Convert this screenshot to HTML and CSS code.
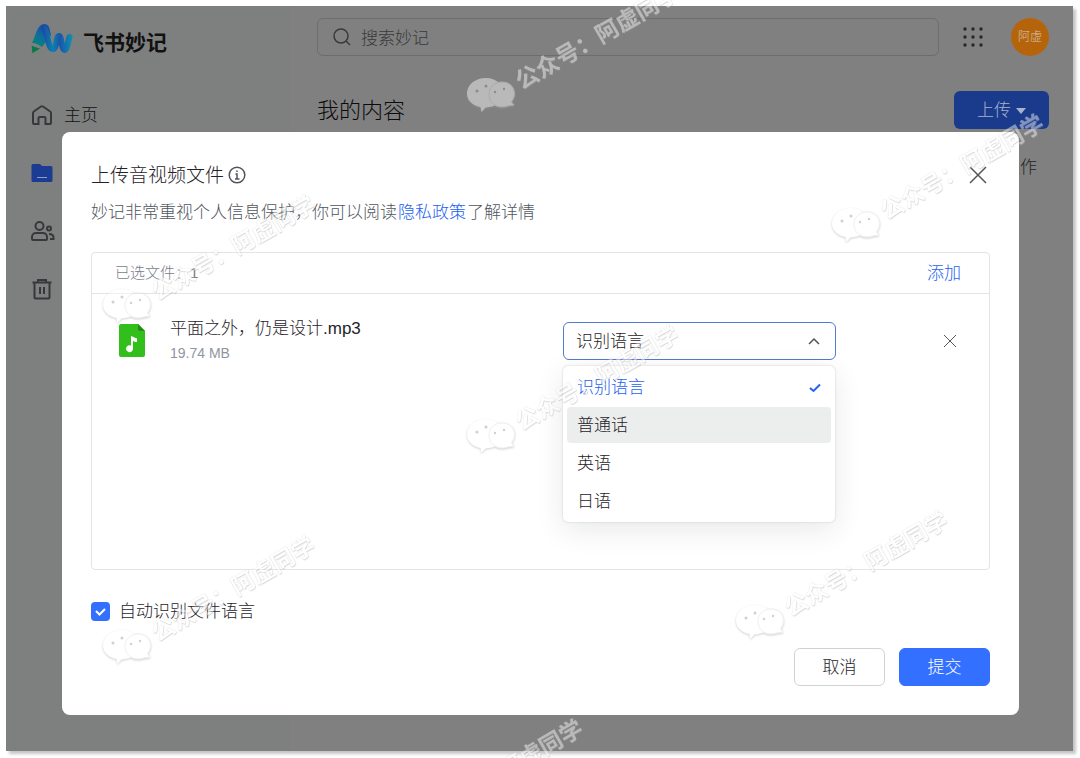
FILE: index.html
```html
<!DOCTYPE html>
<html lang="zh-CN">
<head>
<meta charset="utf-8">
<title>飞书妙记</title>
<meta name="viewport" content="width=device-width, initial-scale=1">
<link rel="stylesheet" href="styles.css">
</head>
<body>
<svg class="defs" width="0" height="0" aria-hidden="true">
  <symbol id="chat" viewBox="0 0 50 36">
    <path d="M20 1C9 1 1 8 1 16.500c0 5 3 9 7.500 11.500 2 1 5 2 6 2l1 5 4-4.500C30 30 38 24 38 16S30 1 20 1z"/>
    <path class="front" d="M36 5c-8 0-13 5.500-13 12.500S28.500 30 36 30c2 0 4-.4 5.600-1l6.400-1-2.500-3C47 22.500 48.500 20 48.500 17 48.500 10 43.500 5 36 5z"/>
    <circle class="eye" cx="11" cy="14" r="1.500"/><circle class="eye" cx="20" cy="9" r="1.500"/>
    <circle class="eye" cx="29" cy="15" r="1.200"/><circle class="eye" cx="38" cy="12" r="1.200"/>
  </symbol>
</svg>
<div class="app">
  <aside class="sidebar">
    <div class="brand">
      <svg width="42" height="32" viewBox="0 0 42 32" aria-hidden="true">
        <defs>
          <linearGradient id="g1" gradientUnits="userSpaceOnUse" x1="4" y1="24" x2="14" y2="2"><stop offset="0" stop-color="#06866e"/><stop offset=".5" stop-color="#0c6f9c"/><stop offset="1" stop-color="#1c4aa6"/></linearGradient>
          <linearGradient id="g2" gradientUnits="userSpaceOnUse" x1="12" y1="0" x2="40" y2="0"><stop offset="0" stop-color="#1c4aa6"/><stop offset=".35" stop-color="#0b82ae"/><stop offset=".6" stop-color="#1a55aa"/><stop offset="1" stop-color="#0d8cae"/></linearGradient>
        </defs>
        <path d="M1 20C4 14 5 8 8 4c3-4 8-4 10 0l2 8-6 8-3 4c-3-2-6-4-10-4z" fill="url(#g1)"/>
        <path d="M13 5C17 11 17 26 22 26C26 26 25 13 28 13C31 13 30 27 34 27C37 26 37 17 38.500 14" fill="none" stroke="url(#g2)" stroke-width="6" stroke-linecap="round" stroke-linejoin="round"/>
        <path d="M0 22l10 3.500L1 31z" fill="#087a4a" stroke="#808080"/>
      </svg>
      <span>飞书妙记</span>
    </div>
    <nav class="nav" aria-label="导航">
      <a href="#home"><svg width="22" height="22" viewBox="0 0 22 22"><path d="M2 9q0-1 .8-1.500L10 2.500q1-.7 2 0l7.200 5Q20 8 20 9v10a1 1 0 0 1-1 1h-4.500v-6a1 1 0 0 0-1-1h-5a1 1 0 0 0-1 1v6H3a1 1 0 0 1-1-1z"/></svg><span>主页</span></a>
      <a href="#mine" aria-label="我的内容"><svg class="solid" width="22" height="22" viewBox="0 0 22 22"><path d="M2 2h7l2 2h9a1.500 1.500 0 0 1 1.500 1.500v13A1.500 1.500 0 0 1 20 20H2a1.500 1.500 0 0 1-1.500-1.500v-15A1.500 1.500 0 0 1 2 2z"/><path class="line" d="M6 15.500h10"/></svg></a>
      <a href="#shared" aria-label="共享内容"><svg width="24" height="22" viewBox="0 0 24 22"><circle cx="8.500" cy="6" r="4"/><path d="M1 19v-2c0-2.500 2-4 4-4h7c2 0 4 1.500 4 4v2c0 .6-.4 1-1 1H2c-.6 0-1-.4-1-1z"/><circle cx="18" cy="8.500" r="2"/><path d="M18 14c3 0 4.500 1.500 4.500 3.500V19H19"/></svg></a>
      <a href="#trash" aria-label="回收站"><svg width="22" height="22" viewBox="0 0 22 22"><path d="M1.500 4.500h19M7 4V2h8v2M3.500 4.500v15c0 .6.400 1 1 1h13c.6 0 1-.4 1-1v-15M9 9v7M13 9v7"/></svg></a>
    </nav>
  </aside>
  <main class="main">
    <header class="topbar">
      <label class="search">
        <svg width="20" height="20" viewBox="0 0 20 20" aria-hidden="true"><circle cx="9" cy="9" r="7"/><path d="M14 14l4 4"/></svg>
        <input type="search" placeholder="搜索妙记" aria-label="搜索妙记">
      </label>
      <button class="apps" type="button" aria-label="应用">
        <svg width="22" height="22" viewBox="0 0 22 22"><circle cx="3" cy="3" r="1.700"/><circle cx="11" cy="3" r="1.700"/><circle cx="19" cy="3" r="1.700"/><circle cx="3" cy="11" r="1.700"/><circle cx="11" cy="11" r="1.700"/><circle cx="19" cy="11" r="1.700"/><circle cx="3" cy="19" r="1.700"/><circle cx="11" cy="19" r="1.700"/><circle cx="19" cy="19" r="1.700"/></svg>
      </button>
      <button class="avatar" type="button">阿虚</button>
    </header>
    <div class="heading">
      <h1>我的内容</h1>
      <button class="upload" type="button">上传<svg width="10" height="6" viewBox="0 0 10 6" aria-hidden="true"><path d="M0 0h10L5 6z"/></svg></button>
    </div>
    <div class="columns">操作</div>
  </main>

  <div class="overlay">
    <section class="modal" role="dialog" aria-labelledby="dialog-title">
      <header class="modal-head">
        <h2 id="dialog-title">上传音视频文件</h2>
        <svg width="18" height="18" viewBox="0 0 18 18" aria-hidden="true"><circle cx="9" cy="9" r="7.800"/><path d="M7.500 8H9v5M7 13h4.500M9 4.500v1.500"/></svg>
        <button class="close" type="button" aria-label="关闭"><svg width="18" height="18" viewBox="0 0 18 18"><path d="M1 1l16 16M17 1L1 17"/></svg></button>
      </header>
      <p class="notice">妙记非常重视个人信息保护，你可以阅读<a href="#privacy">隐私政策</a>了解详情</p>
      <div class="panel">
        <div class="panel-head"><span>已选文件：1</span><button type="button">添加</button></div>
        <div class="file">
          <svg class="file-icon" width="26" height="33" viewBox="0 0 26 33" aria-hidden="true"><path fill="#32bf1c" d="M2 0h17l7 7v24a2 2 0 0 1-2 2H2a2 2 0 0 1-2-2V2a2 2 0 0 1 2-2z"/><path fill="#228c14" d="M19 0l7 7h-5a2 2 0 0 1-2-2z"/><path fill="#fff" d="M12 12c3 1 4 2 6 2.500v3.500c-2 0-3-.5-4-1v7.500a3.500 3.500 0 1 1-2-3z"/></svg>
          <div class="file-info">
            <div class="file-name">平面之外，仍是设计.mp3</div>
            <div class="file-size">19.74 MB</div>
          </div>
          <div class="picker">
            <select aria-label="识别语言"><option>识别语言</option><option>普通话</option><option>英语</option><option>日语</option></select>
            <svg class="caret" width="12" height="8" viewBox="0 0 12 8" aria-hidden="true"><path d="M1 7l5-5 5 5"/></svg>
            <ul class="menu" role="listbox" aria-label="识别语言">
              <li class="chosen" role="option" aria-selected="true">识别语言<svg width="12" height="10" viewBox="0 0 12 10" aria-hidden="true"><path d="M1 5l3.500 3L11 1.500"/></svg></li>
              <li class="active" role="option">普通话</li>
              <li role="option">英语</li>
              <li role="option">日语</li>
            </ul>
          </div>
          <button class="remove" type="button" aria-label="移除"><svg width="14" height="14" viewBox="0 0 14 14"><path d="M1 1l12 12M13 1L1 13"/></svg></button>
        </div>
      </div>
      <label class="auto"><input type="checkbox" checked><span>自动识别文件语言</span></label>
      <footer class="actions">
        <button type="button">取消</button>
        <button class="primary" type="button">提交</button>
      </footer>
    </section>
  </div>
</div>
<div class="marks" aria-hidden="true">
  <div class="mark m1"><svg width="50" height="36"><use href="#chat"/></svg><span>公众号：阿虚同学</span></div>
  <div class="mark m2"><svg width="50" height="36"><use href="#chat"/></svg><span>公众号：阿虚同学</span></div>
  <div class="mark m3"><svg width="50" height="36"><use href="#chat"/></svg><span>公众号：阿虚同学</span></div>
  <div class="mark m4"><svg width="50" height="36"><use href="#chat"/></svg><span>公众号：阿虚同学</span></div>
  <div class="mark m5"><svg width="50" height="36"><use href="#chat"/></svg><span>公众号：阿虚同学</span></div>
  <div class="mark m6"><svg width="50" height="36"><use href="#chat"/></svg><span>公众号：阿虚同学</span></div>
  <div class="mark m7"><svg width="50" height="36"><use href="#chat"/></svg><span>公众号：阿虚同学</span></div>
</div>
</body>
</html>
```
FILE: styles.css
```css
* { box-sizing: border-box; }

body {
  margin: 0;
  min-height: 100vh;
  padding: 6px 7px 7px 6px;
  display: flex;
  position: relative;
  background: #fff;
  color: #1f2329;
  font: 300 17px/24px "Liberation Sans", "Noto Sans CJK SC", sans-serif;
}

button, input, select { font: inherit; color: inherit; }
button { padding: 0; border: 0; background: none; cursor: pointer; }
a { color: inherit; text-decoration: none; }
h1, h2, p, ul { margin: 0; padding: 0; font-weight: inherit; }
svg { display: block; flex: none; fill: none; stroke: currentColor; }
.defs { position: absolute; }

.app {
  position: relative;
  flex: 1;
  display: flex;
  background: #808080;
  box-shadow: 3px 3px 3px #c4c4c4;
}

/* Sidebar */
.sidebar { width: 284px; padding: 16px 25px; background: #7e7f7f; }
.brand {
  display: flex;
  align-items: center;
  gap: 10px;
  height: 34px;
  color: #111;
  font-size: 21px;
  font-weight: 700;
}
.brand svg { stroke: none; }
.brand span { padding-top: 8px; }
.nav { display: flex; flex-direction: column; gap: 34px; padding-top: 47px; }
.nav a { display: flex; align-items: center; gap: 11px; height: 24px; color: #111214; }
.nav span { padding-top: 2px; }
.nav svg { color: #36383b; stroke-width: 2; }
.nav .solid { fill: #1c3c94; stroke: none; }
.nav .line { stroke: #8d9cc8; stroke-width: 1; }

/* Page behind the dialog */
.main { flex: 1; min-width: 0; padding: 12px 24px 0 27px; }
.topbar { display: flex; align-items: center; }
.search {
  flex: 1;
  display: flex;
  align-items: center;
  gap: 9px;
  height: 38px;
  padding: 0 14px;
  border: 1px solid #6c6d6f;
  border-radius: 6px;
  color: #38393b;
}
.search svg { stroke-width: 1.500; }
.search input { flex: 1; min-width: 0; padding: 3px 0 0; border: 0; outline: 0; background: none; }
.search input::placeholder { color: #38393b; opacity: 1; }
.apps { margin: 0 27px 0 23px; color: #25272a; }
.apps svg { fill: currentColor; stroke: none; }
.avatar { width: 38px; height: 38px; border-radius: 50%; background: #b5640c; color: #d2c4b3; font-size: 12px; }
.heading { display: flex; justify-content: space-between; align-items: center; padding-top: 35px; }
.heading h1 { padding-top: 2px; color: #0a0b0c; font-size: 22px; line-height: 36px; }
.upload {
  display: flex;
  align-items: center;
  justify-content: center;
  gap: 5px;
  width: 95px;
  height: 38px;
  padding-top: 2px;
  border-radius: 6px;
  background: #1a3b8c;
  color: #a9b2cc;
}
.upload svg { fill: currentColor; stroke: none; }
.columns { padding: 27px 12px 0; color: #232528; text-align: right; }

/* Dialog */
.overlay { position: absolute; inset: 0; display: flex; padding: 126px 54px 36px 56px; }
.modal {
  flex: 1;
  min-width: 0;
  display: flex;
  flex-direction: column;
  padding: 29px;
  border-radius: 8px;
  background: #fff;
}
.modal-head { display: flex; align-items: center; gap: 4px; height: 28px; }
.modal-head h2 { padding-top: 2px; font-size: 19px; }
.modal-head svg { color: #50545a; stroke-width: 1.500; }
.close { margin: 0 3px 0 auto; }
.notice { padding-top: 12px; color: #50565e; }
.notice a { margin: 0 1px; color: #2461f0; }
.panel {
  flex: 1;
  margin-top: 27px;
  border: 1px solid #e2e4e7;
  border-radius: 4px;
}
.panel-head {
  display: flex;
  align-items: center;
  justify-content: space-between;
  height: 41px;
  padding: 0 28px 0 23px;
  border-bottom: 1px solid #e2e4e7;
  color: #777d86;
  font-size: 15px;
}
.panel-head button { padding-top: 2px; color: #2461f0; font-size: 17px; }
.file {
  display: grid;
  grid-template-columns: 26px 1fr 273px 121px;
  align-items: center;
  padding: 22px 32px 0 27px;
}
.file-icon { stroke: none; }
.file-info { padding: 1px 0 0 25px; }
.file-size { color: #8f959e; font-size: 14px; }
.picker { position: relative; }
.picker select {
  appearance: none;
  display: block;
  width: 100%;
  height: 38px;
  padding: 2px 12px 0;
  border: 1px solid #5379d0;
  border-radius: 6px;
  outline: 0;
  background: #fff;
}
.caret { position: absolute; top: 15px; right: 16px; color: #50545a; stroke-width: 1.500; pointer-events: none; }
.menu {
  position: absolute;
  top: 44px;
  left: 0;
  right: 1px;
  display: grid;
  gap: 2px;
  padding: 3px 4px;
  border-radius: 5px;
  background: #fff;
  box-shadow: 0 0 2px #c4c6c9, 0 8px 28px rgba(31, 35, 41, .1);
  list-style: none;
}
.menu li { display: flex; align-items: center; justify-content: space-between; height: 36px; padding: 2px 10px 0; border-radius: 4px; }
.menu .active { background: #eceeee; }
.menu .chosen { color: #2461f0; }
.menu svg { stroke-width: 2; }
.remove { justify-self: end; color: #555a61; }
.auto { display: flex; align-items: center; gap: 9px; margin-top: 28px; }
.auto span { padding-top: 2px; }
.auto input {
  appearance: none;
  width: 19px;
  height: 19px;
  margin: 0;
  border-radius: 4px;
  background: #3370ff url("data:image/svg+xml,%3Csvg xmlns='http://www.w3.org/2000/svg' viewBox='0 0 19 19'%3E%3Cpath d='M5 9l3.500 3.500L14 7' fill='none' stroke='white' stroke-width='2'/%3E%3C/svg%3E");
}
.actions { display: flex; justify-content: flex-end; gap: 14px; padding-top: 24px; }
.actions button { width: 91px; height: 38px; padding-top: 2px; border: 1px solid #d0d3d6; border-radius: 6px; }
.actions .primary { border-color: #3370ff; background: #3370ff; color: #fff; }

/* Repeated watermark */
.marks { position: absolute; inset: 0; overflow: hidden; pointer-events: none; }
.mark { position: absolute; width: 50px; height: 36px; opacity: .45; color: #fff; }
.mark svg { fill: #fff; stroke: none; filter: drop-shadow(0 1px 1px #999); }
.mark span {
  position: absolute;
  left: 50px;
  top: -12px;
  font-size: 23px;
  font-weight: 700;
  line-height: 24px;
  white-space: nowrap;
  transform: rotate(-30deg);
  transform-origin: 12px 12px;
  text-shadow: 0 1px 1px #999, 0 0 1px #aaa;
}
.front { stroke: #ddd; stroke-width: 1; }
.eye { fill: #999; }
.m1 { left: 466px; top: 77px; }
.m2 { left: 831px; top: 207px; }
.m3 { left: 102px; top: 288px; }
.m4 { left: 466px; top: 418px; }
.m5 { left: 102px; top: 629px; }
.m6 { left: 735px; top: 604px; }
.m7 { left: 370px; top: 812px; }
```
